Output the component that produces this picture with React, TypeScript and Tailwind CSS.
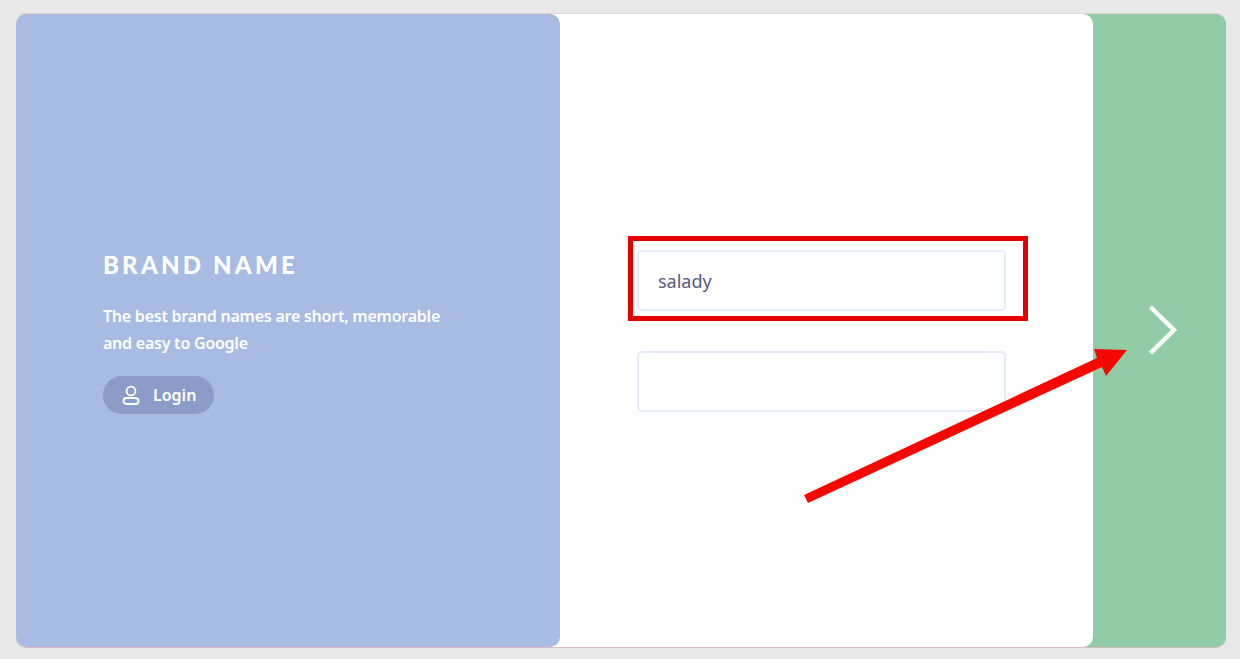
export default function App() {
  return (
    <div className="relative h-[659px] w-[1240px] overflow-hidden bg-[#e9e9e9] pl-4 pt-[14px]" style={{ fontFamily: '"Noto Sans", sans-serif' }}>
      <div className="flex h-[633px] w-[1210px] rounded-[10px] bg-[#91cca7] shadow-[0_1px_0_#dcbcc0,0_-1px_0_#e6d4cc]">
        <div className="flex w-[1077px] rounded-[10px] bg-white">
          <div className="flex w-[544px] flex-col justify-center rounded-[10px] bg-[#a8bbe2] pl-[87px] pt-[2px] text-white">
            <h1 className="text-[24px] font-black leading-[30px] tracking-[3.2px]" style={{ fontFamily: 'Lato, sans-serif' }}>BRAND NAME</h1>
            <p className="mt-[23px] w-[350px] text-[16px] font-semibold leading-[27px] tracking-[-0.24px]">The best brand names are short, memorable and easy to Google</p>
            <button className="mt-[19px] flex h-[38px] w-[111px] items-center rounded-full bg-[#8c9cc8] pl-[19px] text-[16px] font-semibold">
              <svg width="18" height="20" viewBox="0 0 18 20" fill="none" stroke="white" strokeWidth="1.8">
                <circle cx="9" cy="6" r="4.4" />
                <rect x="1.5" y="13" width="15" height="6" rx="3" />
              </svg>
              <span className="ml-[13px]">Login</span>
            </button>
          </div>
          <div className="flex flex-1 flex-col justify-center gap-10 pl-[77px] pt-[1px]">
            <input readOnly value="salady" className="h-[61px] w-[369px] rounded-[5px] border-2 border-[#e3edfa] bg-white px-[19px] text-[18px] text-[#55597f] outline-none" />
            <input readOnly value="" className="h-[61px] w-[369px] rounded-[5px] border-2 border-[#e3edfa] bg-white px-[19px] text-[18px] text-[#55597f] outline-none" />
          </div>
        </div>
        <div className="flex flex-1 items-center justify-center">
          <svg width="34" height="52" viewBox="0 0 34 52" fill="none" stroke="white" strokeWidth="4.5" className="ml-[2px] mb-[1px]">
            <path d="M6.5 3 L30 26 L6.5 49" />
          </svg>
        </div>
      </div>
      <div className="absolute left-[628px] top-[236px] h-[85px] w-[400px] border-[5px] border-[#e80000]" />
      <svg className="absolute left-0 top-0" width="1240" height="659" viewBox="0 0 1240 659">
        <polygon points="804,495 1097,358 1094,349 1127,350 1106,376 1102,367 808,503" fill="#f50800" />
      </svg>
    </div>
  );
}
